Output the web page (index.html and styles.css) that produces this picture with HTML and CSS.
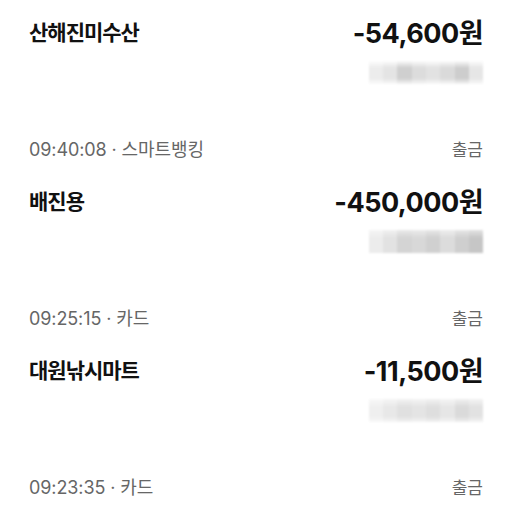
FILE: index.html
```html
<!DOCTYPE html>
<html lang="ko">
<head>
    <meta charset="UTF-8">
    <meta name="viewport" content="width=device-width, initial-scale=1.0">
    <title>거래내역</title>
    <link rel="stylesheet" href="styles.css">
</head>
<body>
    <div class="history">
        <!-- 첫 항목: 시간 줄은 위로 스크롤되어 안 보임 -->
        <div class="item">
            <div class="main-row">
                <span class="name">산해진미수산</span>
                <span class="amount">-54,600원</span>
            </div>
            <div class="balance-row">
                <div class="balance masked-a"></div>
            </div>
        </div>

        <div class="item">
            <div class="meta-row">
                <span class="meta">09:40:08 · 스마트뱅킹</span>
                <span class="type">출금</span>
            </div>
            <div class="main-row">
                <span class="name">배진용</span>
                <span class="amount">-450,000원</span>
            </div>
            <div class="balance-row">
                <div class="balance masked-b"></div>
            </div>
        </div>

        <div class="item">
            <div class="meta-row">
                <span class="meta">09:25:15 · 카드</span>
                <span class="type">출금</span>
            </div>
            <div class="main-row">
                <span class="name">대원낚시마트</span>
                <span class="amount">-11,500원</span>
            </div>
            <div class="balance-row">
                <div class="balance masked-c"></div>
            </div>
        </div>

        <div class="item">
            <div class="meta-row">
                <span class="meta">09:23:35 · 카드</span>
                <span class="type">출금</span>
            </div>
        </div>
    </div>
</body>
</html>
```

FILE: styles.css
```css
body {
    margin: 0;
    background-color: #ffffff;
    font-family: Inter, "Noto Sans CJK KR", sans-serif;
    color: #111111;
}

.history {
    padding: 13px 29px 0 29px;
}

.item {
    display: flex;
    flex-direction: column;
}

.item + .item {
    margin-top: 52px;
}

.meta-row {
    display: flex;
    justify-content: space-between;
    align-items: center;
    height: 24px;
    margin-bottom: 22px;
}

.meta {
    font-size: 18px;
    color: #666666;
    letter-spacing: -0.1px;
}

.type {
    font-size: 17px;
    color: #666666;
}

.main-row {
    display: flex;
    justify-content: space-between;
    align-items: center;
    height: 36px;
}

.name {
    font-size: 21px;
    font-weight: 700;
    letter-spacing: -1px;
}

.amount {
    font-size: 27px;
    font-weight: 700;
    letter-spacing: -0.5px;
}

.balance-row {
    display: flex;
    justify-content: flex-end;
    margin-top: 12px;
}

.balance {
    width: 114px;
    height: 23px;
    filter: blur(1px);
}

.masked-a {
    background:
        linear-gradient(180deg, rgba(255,255,255,0.9) 0%, rgba(255,255,255,0) 30%, rgba(255,255,255,0) 75%, rgba(255,255,255,0.8) 100%),
        linear-gradient(90deg, #ececec 0 14px, #e4e4e4 14px 28px, #cfcfcf 28px 43px, #dcdcdc 43px 57px, #e2e2e2 57px 71px, #dadada 71px 86px, #cdcdcd 86px 100px, #e6e6e6 100px 114px);
}

.masked-b {
    background:
        linear-gradient(180deg, rgba(255,255,255,0.5) 0%, rgba(255,255,255,0) 35%),
        linear-gradient(90deg, #ececec 0 14px, #e2e2e2 14px 28px, #d4d4d4 28px 43px, #d8d8d8 43px 57px, #d0d0d0 57px 71px, #dcdcdc 71px 86px, #cfcfcf 86px 100px, #c6c6c6 100px 114px);
}

.masked-c {
    background:
        linear-gradient(180deg, rgba(255,255,255,0.6) 0%, rgba(255,255,255,0) 35%, rgba(255,255,255,0) 75%, rgba(255,255,255,0.6) 100%),
        linear-gradient(90deg, #efefef 0 14px, #e8e8e8 14px 28px, #e0e0e0 28px 43px, #e4e4e4 43px 57px, #dedede 57px 71px, #e6e6e6 71px 86px, #dadada 86px 100px, #e2e2e2 100px 114px);
}
```
